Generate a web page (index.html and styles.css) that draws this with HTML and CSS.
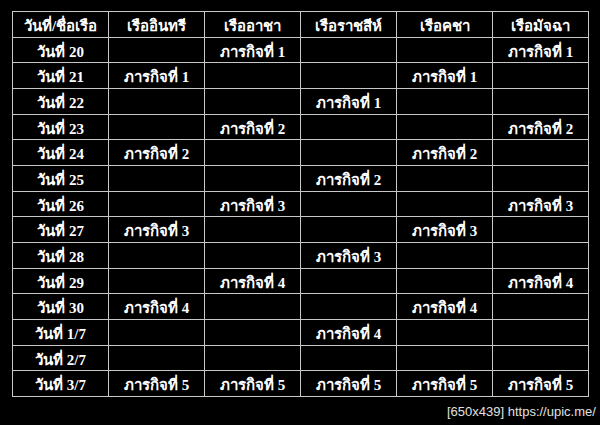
FILE: index.html
```html
<!DOCTYPE html>
<html lang="th">
<head>
<meta charset="utf-8">
<title>ตารางภารกิจเรือ</title>
<link rel="stylesheet" href="styles.css">
</head>
<body>
<div class="page">
<table class="schedule">
<thead>
<tr><th>วันที่/ชื่อเรือ</th><th>เรืออินทรี</th><th>เรืออาชา</th><th>เรือราชสีห์</th><th>เรือคชา</th><th>เรือมัจฉา</th></tr>
</thead>
<tbody>
<tr><td>วันที่ 20</td><td></td><td>ภารกิจที่ 1</td><td></td><td></td><td>ภารกิจที่ 1</td></tr>
<tr><td>วันที่ 21</td><td>ภารกิจที่ 1</td><td></td><td></td><td>ภารกิจที่ 1</td><td></td></tr>
<tr><td>วันที่ 22</td><td></td><td></td><td>ภารกิจที่ 1</td><td></td><td></td></tr>
<tr><td>วันที่ 23</td><td></td><td>ภารกิจที่ 2</td><td></td><td></td><td>ภารกิจที่ 2</td></tr>
<tr><td>วันที่ 24</td><td>ภารกิจที่ 2</td><td></td><td></td><td>ภารกิจที่ 2</td><td></td></tr>
<tr><td>วันที่ 25</td><td></td><td></td><td>ภารกิจที่ 2</td><td></td><td></td></tr>
<tr><td>วันที่ 26</td><td></td><td>ภารกิจที่ 3</td><td></td><td></td><td>ภารกิจที่ 3</td></tr>
<tr><td>วันที่ 27</td><td>ภารกิจที่ 3</td><td></td><td></td><td>ภารกิจที่ 3</td><td></td></tr>
<tr><td>วันที่ 28</td><td></td><td></td><td>ภารกิจที่ 3</td><td></td><td></td></tr>
<tr><td>วันที่ 29</td><td></td><td>ภารกิจที่ 4</td><td></td><td></td><td>ภารกิจที่ 4</td></tr>
<tr><td>วันที่ 30</td><td>ภารกิจที่ 4</td><td></td><td></td><td>ภารกิจที่ 4</td><td></td></tr>
<tr><td>วันที่ 1/7</td><td></td><td></td><td>ภารกิจที่ 4</td><td></td><td></td></tr>
<tr><td>วันที่ 2/7</td><td></td><td></td><td></td><td></td><td></td></tr>
<tr><td>วันที่ 3/7</td><td>ภารกิจที่ 5</td><td>ภารกิจที่ 5</td><td>ภารกิจที่ 5</td><td>ภารกิจที่ 5</td><td>ภารกิจที่ 5</td></tr>
</tbody>
</table>
<div class="watermark">[650x439] https://upic.me/</div>
</div>
</body>
</html>
```
FILE: styles.css
```css
html, body {
  margin: 0;
  padding: 0;
  background: #000;
}
.page {
  width: 600px;
  height: 425px;
  background: #000;
  padding: 11px 0 0 12px;
  box-sizing: border-box;
  overflow: hidden;
}
.schedule {
  border-collapse: collapse;
  table-layout: fixed;
  width: 577px;
  font-family: "Liberation Serif", "Times New Roman", serif;
  font-weight: bold;
  font-size: 15px;
  color: #fff;
}
.schedule tr {
  height: 25.67px;
}
.schedule th,
.schedule td {
  width: 95px;
  padding: 4px 0 0 0;
  border: 1px solid #c8c8c8;
  text-align: center;
  vertical-align: top;
  white-space: nowrap;
  line-height: 20px;
  font-weight: bold;
}
.watermark {
  margin: 8px 0 0 435px;
  font-family: "Liberation Sans", sans-serif;
  font-size: 13px;
  line-height: 14px;
  color: #e0e0e0;
  white-space: nowrap;
}
```
